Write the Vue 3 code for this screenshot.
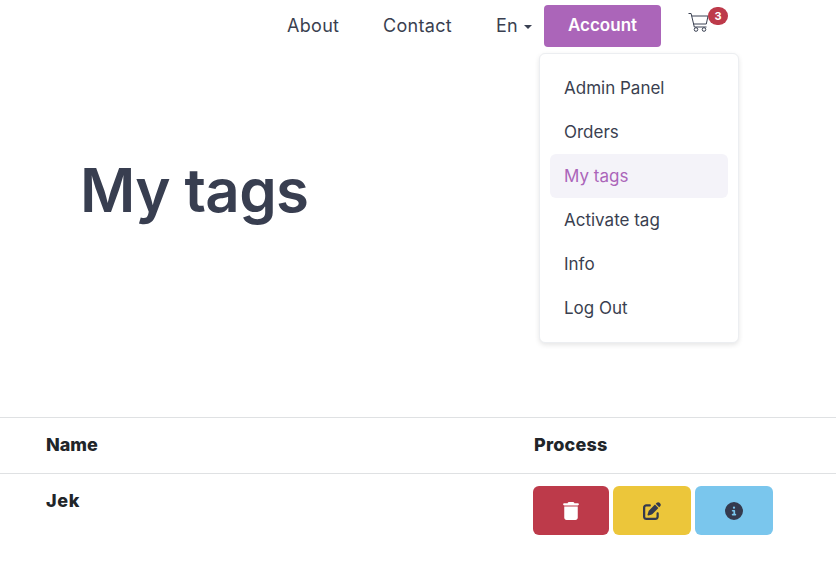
<script setup>
const menu = ['Admin Panel', 'Orders', 'My tags', 'Activate tag', 'Info', 'Log Out']
</script>

<template>
  <div class="page">
    <nav class="nav">
      <a class="link about">About</a>
      <a class="link contact">Contact</a>
      <a class="link lang">En <span class="caret"></span></a>
      <div class="account-wrap">
        <button class="account">Account</button>
        <ul class="dropdown">
          <li v-for="m in menu" :key="m" :class="{ active: m === 'My tags' }">{{ m }}</li>
        </ul>
      </div>
      <div class="cart">
        <svg width="22" height="21" viewBox="0 0 22 21" fill="none" stroke="#3a4152" stroke-width="1">
          <path d="M0.5 1.5h2.6l3.2 13.500h12.200" />
          <path d="M3.700 4h16.300l-1.700 8H5.300" />
          <circle cx="8" cy="17.500" r="1.800" />
          <circle cx="16" cy="17.500" r="1.800" />
        </svg>
        <span class="badge">3</span>
      </div>
    </nav>
    <header class="hero">
      <h1>My tags</h1>
    </header>
    <div class="table">
      <div class="row head">
        <div class="col-name">Name</div>
        <div class="col-proc">Process</div>
      </div>
      <div class="row body">
        <div class="col-name">Jek</div>
        <div class="col-proc actions">
          <button class="btn del">
            <svg width="16" height="18" viewBox="0 0 448 512" fill="#fff"><path d="M135.200 17.700C140.600 6.800 151.700 0 163.800 0H284.200c12.100 0 23.200 6.800 28.600 17.700L320 32h96c17.700 0 32 14.300 32 32s-14.300 32-32 32H32C14.300 96 0 81.700 0 64S14.300 32 32 32h96l7.200-14.300zM32 128H416V448c0 35.300-28.700 64-64 64H96c-35.300 0-64-28.700-64-64V128z"/></svg>
          </button>
          <button class="btn edit">
            <svg width="18" height="18" viewBox="0 0 512 512" fill="#343a4e"><path d="M471.600 21.700c-21.900-21.900-57.300-21.900-79.200 0L362.300 51.700l97.900 97.900 30.100-30.100c21.900-21.900 21.900-57.300 0-79.200L471.600 21.700zm-299.200 220c-6.100 6.100-10.800 13.600-13.500 21.900l-29.600 88.800c-2.900 8.600-.6 18.100 5.800 24.600s15.900 8.700 24.600 5.800l88.800-29.600c8.200-2.700 15.700-7.400 21.900-13.500L437.700 172.300 339.700 74.300 172.400 241.700zM96 64C43 64 0 107 0 160V416c0 53 43 96 96 96H352c53 0 96-43 96-96V320c0-17.700-14.300-32-32-32s-32 14.300-32 32v96c0 17.700-14.300 32-32 32H96c-17.700 0-32-14.300-32-32V160c0-17.700 14.300-32 32-32h96c17.700 0 32-14.300 32-32s-14.300-32-32-32H96z"/></svg>
          </button>
          <button class="btn info">
            <svg width="18" height="18" viewBox="0 0 512 512" fill="#343a4e"><path d="M256 512A256 256 0 1 0 256 0a256 256 0 1 0 0 512zM216 336h24V272H216c-13.300 0-24-10.700-24-24s10.700-24 24-24h48c13.300 0 24 10.700 24 24v88h8c13.300 0 24 10.700 24 24s-10.700 24-24 24H216c-13.300 0-24-10.700-24-24s10.700-24 24-24zm40-208a32 32 0 1 1 0 64 32 32 0 1 1 0-64z"/></svg>
          </button>
        </div>
      </div>
    </div>
  </div>
</template>

<style scoped>
.page {
  width: 836px;
  height: 582px;
  overflow: hidden;
  background: #fff;
  font-family: "Inter", "Liberation Sans", sans-serif;
  color: #3a3f50;
}
.nav {
  display: flex;
  align-items: center;
  height: 52px;
  box-sizing: border-box;
  padding: 0 0 0 287px;
}
.link {
  font-size: 18px;
  letter-spacing: .3px;
  line-height: 52px;
  white-space: nowrap;
}
.about { width: 96px; }
.contact { width: 113px; }
.lang { width: 48px; }
.caret {
  display: inline-block;
  margin-left: 1px;
  vertical-align: 3px;
  border-top: 4px solid #3a4152;
  border-left: 4px solid transparent;
  border-right: 4px solid transparent;
}
.account-wrap { position: relative; width: 144px; }
.account {
  display: block;
  width: 117px;
  height: 42px;
  border: none;
  border-radius: 4px;
  background: #ab65b9;
  color: #fff;
  padding: 0 0 3px;
  font: 600 17px "Inter", sans-serif;
}
.dropdown {
  position: absolute;
  z-index: 2;
  left: -5px;
  top: 48px;
  width: 200px;
  box-sizing: border-box;
  margin: 0;
  padding: 12px 10px;
  list-style: none;
  background: #fff;
  border: 1px solid #eceef1;
  border-radius: 6px;
  box-shadow: 0 2px 5px rgba(0, 0, 0, .1);
}
.dropdown li {
  height: 44px;
  padding: 0 14px;
  line-height: 44px;
  font-size: 17px;
  border-radius: 6px;
}
.dropdown .active {
  background: #f4f3f9;
  color: #ab65b9;
}
.cart { position: relative; width: 22px; height: 21px; margin-top: -7px; }
.cart svg { display: block; }
.badge {
  position: absolute;
  left: 20px;
  top: -5px;
  width: 20px;
  height: 18px;
  border-radius: 9px;
  background: #bd3a4a;
  color: #fff;
  font: 700 11px/18px "Inter", sans-serif;
  text-align: center;
}
.hero { height: 365px; padding-left: 80px; box-sizing: border-box; }
h1 {
  margin: 0;
  padding-top: 98px;
  font-size: 60px;
  line-height: 80px;
  letter-spacing: -.6px;
  font-weight: 600;
  color: #383e50;
}
.table { border-top: 1px solid #dfe1e3; }
.row { display: flex; padding-left: 46px; }
.head {
  height: 55px;
  align-items: center;
  border-bottom: 1px solid #dfe1e3;
}
.head > div { padding-bottom: 2px; }
.body { padding-top: 12px; }
.row > div { font-weight: 800; font-size: 18px; color: #212529; }
.col-name { width: 487px; }
.col-proc { letter-spacing: .2px; }
.head .col-proc { margin-left: 1px; }
.body .col-name { padding-top: 4px; line-height: 22px; letter-spacing: .6px; }
.actions { display: flex; gap: 4px; }
.btn {
  height: 49px;
  width: 78px;
  border: none;
  border-radius: 6px;
  display: flex;
  align-items: center;
  justify-content: center;
}
.del { background: #bd3a4a; width: 76px; }
.edit { background: #ecc63a; }
.info { background: #7ac6ed; }
</style>
